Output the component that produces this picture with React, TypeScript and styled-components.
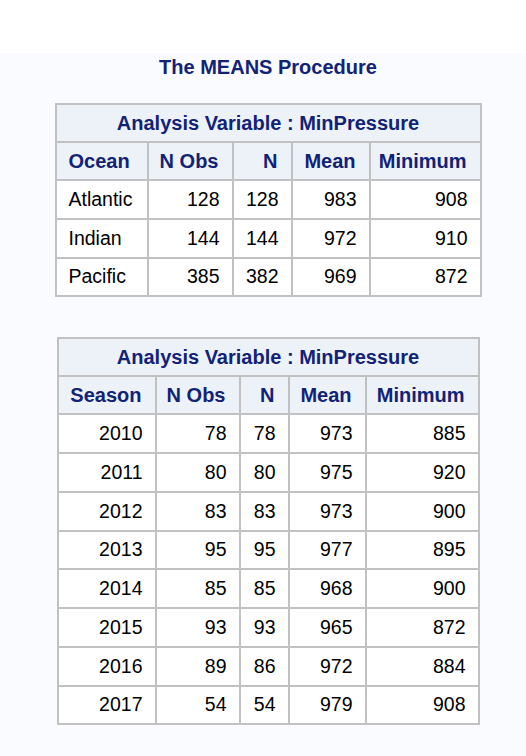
import styled, { createGlobalStyle } from 'styled-components'

const GlobalStyle = createGlobalStyle`
  * { box-sizing: border-box; }
  body {
    margin: 0;
    background: #fafbfe;
    font-family: "Liberation Sans", Arial, sans-serif;
  }
`

const TopBand = styled.div`
  height: 53px;
  background: #ffffff;
`

const Content = styled.div`
  min-height: calc(100vh - 53px);
  background: #fafbfe;
  padding: 3px 0 30px 10px;
`

const Title = styled.h1`
  margin: 0 0 24px;
  font-size: 20px;
  line-height: 23px;
  font-weight: bold;
  text-align: center;
  color: #112277;
`

const Table = styled.table<{ $width: number, $gap: number }>`
  width: ${p => p.$width}px;
  margin: ${p => p.$gap}px auto 0;
  border-collapse: separate;
  border-spacing: 0;
  border-top: 2px solid #c1c1c1;
  border-left: 2px solid #c1c1c1;
  font-size: 19.5px;
`

const SpanHeader = styled.th`
  height: 38px;
  padding: 0;
  background: #edf2f9;
  color: #112277;
  font-size: 20px;
  font-weight: bold;
  text-align: center;
  vertical-align: middle;
  border-right: 2px solid #c1c1c1;
  border-bottom: 2px solid #c1c1c1;
`

const ColHeader = styled.th<{ $w: number, $left?: boolean }>`
  width: ${p => p.$w}px;
  height: 38px;
  padding: ${p => (p.$left ? '0 2px 0 12px' : '0 13px 0 2px')};
  background: #edf2f9;
  color: #112277;
  font-size: 20px;
  font-weight: bold;
  text-align: ${p => (p.$left ? 'left' : 'right')};
  vertical-align: middle;
  white-space: nowrap;
  border-right: 2px solid #c1c1c1;
  border-bottom: 2px solid #c1c1c1;
`

const Cell = styled.td<{ $left?: boolean }>`
  height: 38.75px;
  padding: ${p => (p.$left ? '0 4px 0 12px' : '0 12px 0 4px')};
  background: #ffffff;
  color: #000000;
  text-align: ${p => (p.$left ? 'left' : 'right')};
  vertical-align: middle;
  white-space: nowrap;
  border-right: 2px solid #c1c1c1;
  border-bottom: 2px solid #c1c1c1;
`

interface Column {
  label: string
  width: number
  left?: boolean
}

interface MeansTableProps {
  columns: Column[]
  rows: string[][]
  gap: number
}

function MeansTable ({ columns, rows, gap }: MeansTableProps): JSX.Element {
  const width = 2 + columns.reduce((sum, c) => sum + c.width, 0)

  return (
    <Table $width={width} $gap={gap}>
      <thead>
        <tr>
          <SpanHeader colSpan={columns.length}>Analysis Variable : MinPressure</SpanHeader>
        </tr>
        <tr>
          {columns.map(c => (
            <ColHeader key={c.label} $w={c.width} $left={c.left}>{c.label}</ColHeader>
          ))}
        </tr>
      </thead>
      <tbody>
        {rows.map(row => (
          <tr key={row[0]}>
            {row.map((value, i) => (
              <Cell key={i} $left={columns[i].left}>{value}</Cell>
            ))}
          </tr>
        ))}
      </tbody>
    </Table>
  )
}

const oceanColumns: Column[] = [
  { label: 'Ocean', width: 92, left: true },
  { label: 'N Obs', width: 85 },
  { label: 'N', width: 59 },
  { label: 'Mean', width: 78 },
  { label: 'Minimum', width: 111 }
]

const oceanRows = [
  ['Atlantic', '128', '128', '983', '908'],
  ['Indian', '144', '144', '972', '910'],
  ['Pacific', '385', '382', '969', '872']
]

const seasonColumns: Column[] = [
  { label: 'Season', width: 98 },
  { label: 'N Obs', width: 84 },
  { label: 'N', width: 49 },
  { label: 'Mean', width: 77 },
  { label: 'Minimum', width: 113 }
]

const seasonRows = [
  ['2010', '78', '78', '973', '885'],
  ['2011', '80', '80', '975', '920'],
  ['2012', '83', '83', '973', '900'],
  ['2013', '95', '95', '977', '895'],
  ['2014', '85', '85', '968', '900'],
  ['2015', '93', '93', '965', '872'],
  ['2016', '89', '86', '972', '884'],
  ['2017', '54', '54', '979', '908']
]

function App (): JSX.Element {
  return (
    <>
      <GlobalStyle />
      <TopBand />
      <Content>
        <Title>The MEANS Procedure</Title>
        <MeansTable columns={oceanColumns} rows={oceanRows} gap={0} />
        <MeansTable columns={seasonColumns} rows={seasonRows} gap={40} />
      </Content>
    </>
  )
}

export default App
